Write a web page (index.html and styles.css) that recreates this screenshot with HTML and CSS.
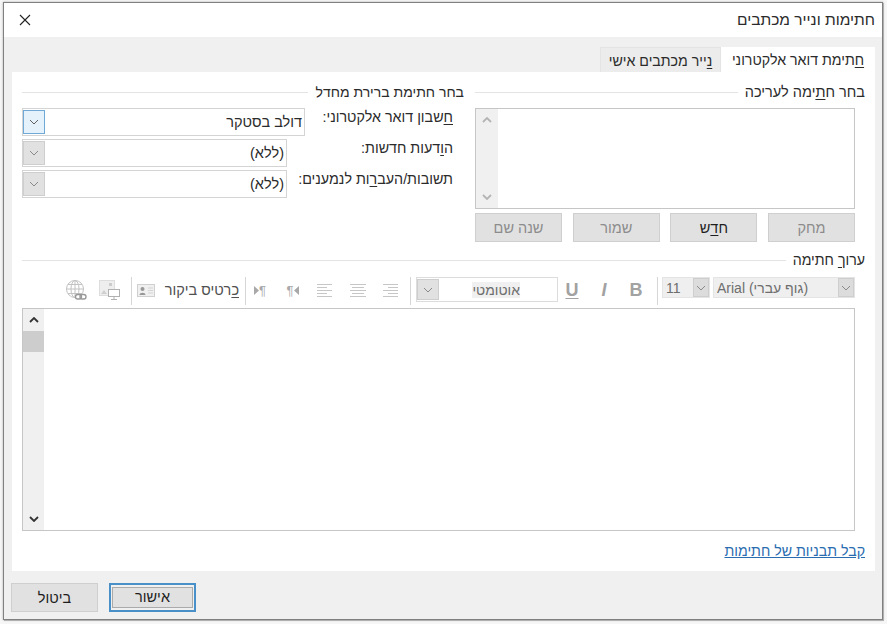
FILE: index.html
```html
<!DOCTYPE html>
<html lang="he" dir="rtl">
<head>
    <meta charset="UTF-8">
    <title>חתימות ונייר מכתבים</title>
    <link rel="stylesheet" href="styles.css">
</head>
<body>
    <svg class="defs" width="0" height="0">
        <symbol id="chev" viewBox="0 0 10 6"><path d="M1 1l4 4 4-4" fill="none" stroke="currentColor"/></symbol>
        <symbol id="chevUp" viewBox="0 0 10 6"><path d="M1 5l4-4 4 4" fill="none" stroke="currentColor" stroke-width="1.8"/></symbol>
        <symbol id="chevDown" viewBox="0 0 10 6"><path d="M1 1l4 4 4-4" fill="none" stroke="currentColor" stroke-width="1.8"/></symbol>
    </svg>

    <div class="dialog">
        <div class="titlebar">
            <span class="title">חתימות ונייר מכתבים</span>
            <svg class="close" width="12" height="12" viewBox="0 0 12 12"><path d="M1 1l10 10M11 1L1 11" stroke="#222" stroke-width="1.1" fill="none"/></svg>
        </div>

        <div class="tabs">
            <div class="tab active"><u>ח</u>תימת דואר אלקטרוני</div>
            <div class="tab"><u>נ</u>ייר מכתבים אישי</div>
        </div>

        <div class="panel">
            <div class="topRow">
                <!-- signature list -->
                <div class="pickCol">
                    <div class="legend"><span>בחר ח<u>ת</u>ימה לעריכה</span><i></i></div>
                    <div class="indent">
                        <div class="listbox">
                            <div class="listScroll">
                                <svg width="10" height="6"><use href="#chevUp"/></svg>
                                <svg width="10" height="6"><use href="#chevDown"/></svg>
                            </div>
                        </div>
                        <div class="actions">
                            <button class="btn off">מחק</button>
                            <button class="btn"><span>ח<u>ד</u>ש</span></button>
                            <button class="btn off">שמור</button>
                            <button class="btn off">שנה שם</button>
                        </div>
                    </div>
                </div>

                <!-- defaults -->
                <div class="defaultCol">
                    <div class="legend"><span>בחר חתימת ברירת מחדל</span><i></i></div>
                    <div class="formRow">
                        <label><u>ח</u>שבון דואר אלקטרוני:</label>
                        <div class="select wide"><span>דולב בסטקר</span><b class="arrow hot"><svg width="10" height="6"><use href="#chev"/></svg></b></div>
                    </div>
                    <div class="formRow">
                        <label>ה<u>ו</u>דעות חדשות:</label>
                        <div class="select"><span>(ללא)</span><b class="arrow"><svg width="10" height="6"><use href="#chev"/></svg></b></div>
                    </div>
                    <div class="formRow">
                        <label>תשובות/העב<u>ר</u>ות לנמענים:</label>
                        <div class="select"><span>(ללא)</span><b class="arrow"><svg width="10" height="6"><use href="#chev"/></svg></b></div>
                    </div>
                </div>
            </div>

            <div class="legend editLegend"><span>ערו<u>ך</u> חתימה</span><i></i></div>
            <div class="indent">
                <div class="toolbar">
                    <div class="combo fontCombo"><span>Arial (גוף עברי)</span><b class="arrow"><svg width="10" height="6"><use href="#chev"/></svg></b></div>
                    <div class="combo sizeCombo"><span>11</span><b class="arrow"><svg width="10" height="6"><use href="#chev"/></svg></b></div>
                    <div class="sep first"></div>
                    <div class="tool fmt">B</div>
                    <div class="tool fmt ital">I</div>
                    <div class="tool fmt und">U</div>
                    <div class="select colorCombo"><span>אוטומטי</span><b class="arrow"><svg width="10" height="6"><use href="#chev"/></svg></b></div>
                    <div class="sep second"></div>
                    <div class="alignGroup">
                        <div class="tool"><svg width="16" height="13" viewBox="0 0 16 13"><path d="M1 .5h15M6 3.500h10M1 6.500h15M6 9.500h10M1 12.500h15" stroke="#c6c6c6" fill="none"/></svg></div>
                        <div class="tool"><svg width="16" height="13" viewBox="0 0 16 13"><path d="M0 .5h16M2 3.500h12M0 6.500h16M2 9.500h12M0 12.500h16" stroke="#c6c6c6" fill="none"/></svg></div>
                        <div class="tool"><svg width="16" height="13" viewBox="0 0 16 13"><path d="M0 .5h15M0 3.500h10M0 6.500h15M0 9.500h10M0 12.500h15" stroke="#c6c6c6" fill="none"/></svg></div>
                        <div class="tool"><svg width="5" height="9" viewBox="0 0 5 9"><path d="M5 0v9L0 4.500z" fill="#a8a8a8"/></svg><span class="para">¶</span></div>
                        <div class="tool"><span class="para">¶</span><svg width="5" height="9" viewBox="0 0 5 9"><path d="M0 0v9l5-4.500z" fill="#a8a8a8"/></svg></div>
                    </div>
                    <div class="sep third"></div>
                    <div class="cardTool">
                        <span><u>כ</u>רטיס ביקור</span>
                        <svg width="18" height="13" viewBox="0 0 18 13"><rect x=".5" y=".5" width="17" height="12" fill="#f0f0f0" stroke="#d0d0d0"/><circle cx="5.500" cy="5" r="2" fill="#989898"/><path d="M2.500 11c0-3 6-3 6 0z" fill="#989898"/><path d="M11 4h5M11 6.500h5M11 9h5" stroke="#d4d4d4"/></svg>
                    </div>
                    <div class="sep fourth"></div>
                    <div class="tool iconTool picTool">
                        <svg width="21" height="20" viewBox="0 0 21 20"><rect x=".5" y=".5" width="15" height="15" fill="#eeeeee" stroke="#dddddd"/><rect x="10" y="3" width="3" height="3" fill="#cccccc"/><path d="M2 14l3-4 3 4z" fill="#d0d0d0"/><rect x="9.500" y="9.500" width="11" height="7" fill="#fff" stroke="#b0b0b0"/><path d="M15 17v2M12 19.500h6" stroke="#b0b0b0"/></svg>
                    </div>
                    <div class="tool iconTool">
                        <svg width="21" height="21" viewBox="0 0 21 21"><g fill="none" stroke="#c2c2c2"><circle cx="9" cy="9" r="8.500"/><ellipse cx="9" cy="9" rx="4" ry="8.500"/><path d="M9 .5v17M.5 9h17M2 4.500h14M2 13.500h14"/></g><g fill="none" stroke="#999999" stroke-width="1.400"><rect x="9.500" y="14.500" width="6" height="4.500" rx="2.200" fill="#fff"/><rect x="14" y="14.500" width="6" height="4.500" rx="2.200"/></g></svg>
                    </div>
                </div>

                <div class="editor">
                    <div class="editScroll">
                        <span class="scrollBtn"><svg width="10" height="6"><use href="#chevUp"/></svg></span>
                        <span class="thumb"></span>
                        <span class="track"></span>
                        <span class="scrollBtn"><svg width="10" height="6"><use href="#chevDown"/></svg></span>
                    </div>
                </div>
            </div>

            <a class="link" href="#">קבל תבניות של חתימות</a>
        </div>

        <div class="footer">
            <button class="btn ok"><span>אישור</span></button>
            <button class="btn">ביטול</button>
        </div>
    </div>
</body>
</html>
```

FILE: styles.css
```css
html, body {
    margin: 0;
    height: 100%;
}

body {
    width: 887px;
    height: 624px;
    box-sizing: border-box;
    padding: 2px 4px 4px 3px;
    overflow: hidden;
    background: #f6f6f6;
    font-family: "Liberation Sans", Arial, sans-serif;
    font-size: 14.5px;
    color: #2b2b2b;
}

.defs {
    position: absolute;
}

u {
    text-underline-offset: 2px;
}

.dialog {
    height: 100%;
    box-sizing: border-box;
    border: 1px solid #808080;
    background: #f0f0f0;
    display: flex;
    flex-direction: column;
    box-shadow: 1px 1px 0 #b0b0b0, 0 0 2px #aaa;
}

.titlebar {
    height: 34px;
    flex: none;
    background: #fff;
    display: flex;
    align-items: center;
    justify-content: space-between;
    padding: 0 7px 0 15px;
}

.title {
    font-size: 15.5px;
}

.tabs {
    height: 35px;
    flex: none;
    display: flex;
    align-items: flex-end;
    padding-right: 7px;
    font-size: 14.2px;
}

.tab {
    height: 25px;
    line-height: 26px;
    background: #ececec;
    border: 1px solid #e4e4e4;
    border-bottom: none;
    box-sizing: border-box;
    width: 121px;
    text-align: center;
    white-space: nowrap;
}

.tab.active {
    width: 154px;
    background: #fff;
    border: none;
}

.panel {
    flex: none;
    height: 499px;
    box-sizing: border-box;
    margin: 0 7px 0 8px;
    padding: 11px 10px 0;
    background: #fff;
}

.topRow {
    display: flex;
    gap: 11px;
}

.pickCol {
    width: 390px;
    flex: none;
}

.defaultCol {
    flex: 1;
}

.legend {
    display: flex;
    align-items: center;
    height: 18px;
    gap: 7px;
}

.legend i {
    flex: 1;
    height: 1px;
    background: #e4e4e4;
}

.defaultCol .legend span {
    font-size: 14px;
}

.editLegend span {
    font-size: 14.2px;
}

.indent {
    margin-right: 10px;
}

.pickCol .indent {
    margin-top: 7px;
}

.listbox {
    height: 101px;
    box-sizing: border-box;
    border: 1px solid #c6c6c6;
    display: flex;
}

.listScroll {
    width: 22px;
    margin-right: auto;
    padding: 8px 0;
    box-sizing: border-box;
    background: #f0f0f0;
    color: #b4b4b4;
    display: flex;
    flex-direction: column;
    align-items: center;
    justify-content: space-between;
}

.actions {
    display: flex;
    justify-content: space-between;
    margin-top: 4px;
}

.btn {
    width: 87px;
    height: 29px;
    padding: 0;
    font: inherit;
    color: #1e1e1e;
    background: #e1e1e1;
    border: 1px solid #cfcfcf;
}

.btn.off {
    color: #8c8c8c;
}

.formRow {
    display: flex;
    margin-bottom: 3px;
}

.defaultCol .legend {
    margin-bottom: 7px;
}

.formRow label {
    flex: 1;
    height: 18px;
    line-height: 18px;
    padding-right: 11px;
    white-space: nowrap;
    font-size: 14.3px;
}

.select {
    width: 265px;
    height: 28px;
    flex: none;
    box-sizing: border-box;
    border: 1px solid #d4d4d4;
    display: flex;
    align-items: center;
    justify-content: space-between;
    padding: 0 2px 0 0;
}

.select.wide {
    width: 283px;
}

.arrow {
    width: 22px;
    align-self: stretch;
    flex: none;
    margin: 1px 0;
    background: #e1e1e1;
    border: 1px solid #cecece;
    box-sizing: border-box;
    color: #8a8a8a;
    display: flex;
    align-items: center;
    justify-content: center;
}

.arrow.hot {
    background: #e5f1fb;
    border-color: #6fa9d8;
    color: #606060;
}

.editLegend {
    margin-top: 9px;
}

.toolbar {
    margin-top: 6px;
    height: 30px;
    display: flex;
    align-items: flex-start;
}

.combo {
    margin-top: 2px;
    height: 21px;
    box-sizing: border-box;
    direction: ltr;
    display: flex;
    align-items: center;
    justify-content: space-between;
    background: #efefef;
    border: 1px solid #e4e4e4;
    color: #6e6e6e;
    font-size: 14px;
    padding-left: 3px;
}

.combo .arrow {
    width: 16px;
    margin: 0;
    background: #dcdcdc;
}

.fontCombo {
    width: 142px;
}

.sizeCombo {
    width: 48px;
    margin-right: 3px;
}

.sep {
    width: 1px;
    height: 28px;
    flex: none;
    margin-top: 2px;
    background: #d6d6d6;
}

.sep.first {
    margin: 2px 4px 0 5px;
}

.sep.second {
    margin: 2px 5px 0 5px;
}

.sep.third {
    margin-right: -1px;
}

.tool {
    width: 30px;
    height: 30px;
    flex: none;
    display: flex;
    align-items: center;
    justify-content: center;
    color: #a2a2a2;
}

.fmt {
    width: 32px;
    font-size: 18px;
    font-weight: bold;
}

.ital {
    font-style: italic;
}

.und {
    text-decoration: underline;
    text-underline-offset: 2px;
}

.colorCombo {
    width: 142px;
    height: 25px;
    margin: 2px -2px 0 0;
    border-color: #dcdcdc;
    color: #6e6e6e;
    font-size: 14px;
    padding-right: 37px;
    padding-left: 0;
}

.colorCombo span {
    background: #f0f0f0;
}

.alignGroup {
    display: flex;
    gap: 2.5px;
}

.para {
    font-size: 13px;
    color: #a8a8a8;
}

.cardTool {
    width: 113px;
    height: 30px;
    flex: none;
    box-sizing: border-box;
    padding: 0 6px 0 5px;
    display: flex;
    align-items: center;
    justify-content: space-between;
    color: #505050;
}

.iconTool {
    width: 33px;
}

.picTool {
    margin-right: 5px;
}

.editor {
    margin-top: 3px;
    height: 223px;
    box-sizing: border-box;
    border: 1px solid #c6c6c6;
    display: flex;
}

.editScroll {
    width: 21px;
    margin-right: auto;
    background: #f0f0f0;
    color: #333;
    display: flex;
    flex-direction: column;
}

.scrollBtn {
    height: 22px;
    flex: none;
    display: flex;
    align-items: center;
    justify-content: center;
}

.thumb {
    height: 21px;
    flex: none;
    background: #cdcdcd;
}

.track {
    flex: 1;
}

.link {
    display: block;
    margin-top: 12px;
    width: max-content;
    line-height: 17px;
    font-size: 14.2px;
    color: #2a6cb0;
}

.footer {
    flex: 1;
    display: flex;
    flex-direction: row-reverse;
    justify-content: flex-end;
    gap: 11px;
    padding: 12px 0 0 7px;
    direction: ltr;
}

.footer .btn {
    direction: rtl;
}

.btn.ok {
    border: 2px solid #4a90c8;
    padding: 2px;
    background-clip: content-box;
}

.btn.ok span {
    display: block;
    line-height: 19px;
    outline: 1px solid #aaa;
}
```
